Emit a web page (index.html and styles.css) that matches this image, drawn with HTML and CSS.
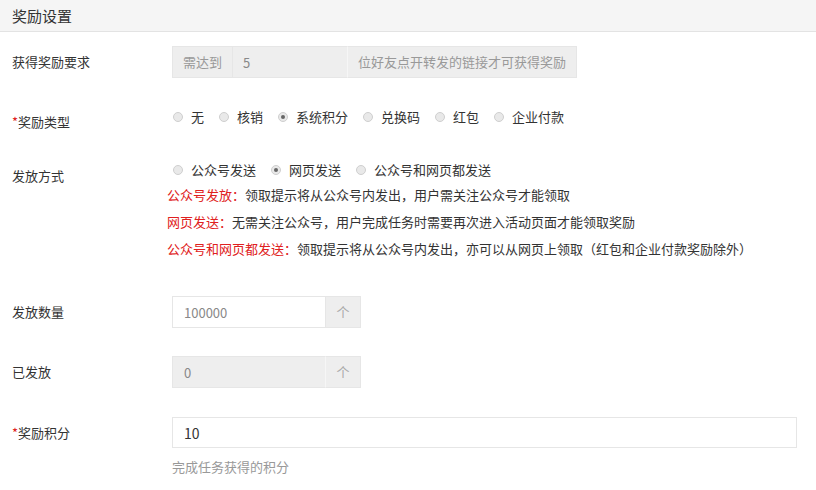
FILE: index.html
```html
<!DOCTYPE html>
<html lang="zh-CN">
  <head>
    <meta charset="UTF-8" />
    <title>奖励设置</title>
    <meta name="viewport" content="width=device-width, initial-scale=1.0" />
    <link rel="stylesheet" href="styles.css">
  </head>
  <body>
    <div class="panel-head">奖励设置</div>

    <div class="form">
      <div class="row row-require">
        <div class="label">获得奖励要求</div>
        <div class="group">
          <span class="addon">需达到</span>
          <input class="group-input" type="text" value="5" disabled />
          <span class="addon">位好友点开转发的链接才可获得奖励</span>
        </div>
      </div>

      <div class="row row-type">
        <div class="label label-radio"><span class="req">*</span>奖励类型</div>
        <div class="radios">
          <label><input type="radio" name="type" />无</label>
          <label><input type="radio" name="type" />核销</label>
          <label><input type="radio" name="type" checked />系统积分</label>
          <label><input type="radio" name="type" />兑换码</label>
          <label><input type="radio" name="type" />红包</label>
          <label><input type="radio" name="type" />企业付款</label>
        </div>
      </div>

      <div class="row row-send">
        <div class="label label-radio">发放方式</div>
        <div>
          <div class="radios">
            <label><input type="radio" name="send" />公众号发送</label>
            <label><input type="radio" name="send" checked />网页发送</label>
            <label><input type="radio" name="send" />公众号和网页都发送</label>
          </div>
          <div class="send-help">
            <p><span class="red">公众号发放：</span>领取提示将从公众号内发出，用户需关注公众号才能领取</p>
            <p><span class="red">网页发送：</span>无需关注公众号，用户完成任务时需要再次进入活动页面才能领取奖励</p>
            <p><span class="red">公众号和网页都发送：</span>领取提示将从公众号内发出，亦可以从网页上领取（红包和企业付款奖励除外）</p>
          </div>
        </div>
      </div>

      <div class="row row-amount">
        <div class="label">发放数量</div>
        <div class="group">
          <input class="num-input" type="text" value="100000" />
          <span class="unit">个</span>
        </div>
      </div>

      <div class="row row-sent">
        <div class="label">已发放</div>
        <div class="group">
          <input class="num-input" type="text" value="0" disabled />
          <span class="unit">个</span>
        </div>
      </div>

      <div class="row row-points">
        <div class="label"><span class="req">*</span>奖励积分</div>
        <div class="points">
          <input class="wide-input" type="text" value="10" />
          <div class="hint">完成任务获得的积分</div>
        </div>
      </div>
    </div>
  </body>
</html>
```

FILE: styles.css
```css
body {
  margin: 0;
  font-family: "Microsoft YaHei", "Noto Sans CJK SC", sans-serif;
  font-size: 13px;
  color: #333;
  background: #fff;
}

.panel-head {
  height: 31px;
  line-height: 31px;
  padding-left: 12px;
  font-size: 15px;
  background: #f5f5f5;
  border-bottom: 1px solid #e3e3e3;
}

.row {
  display: flex;
  align-items: flex-start;
}

.label {
  width: 172px;
  padding-left: 12px;
  box-sizing: border-box;
  line-height: 32px;
  flex-shrink: 0;
}

.label-radio {
  line-height: 18px;
  margin-top: 5px;
}

.req {
  color: #e02020;
}

.row-require { margin-top: 14px; }
.row-type { margin-top: 30px; }
.row-send { margin-top: 30px; }
.row-send .label-radio { margin-top: 6px; }
.row-amount { margin-top: 34px; }
.row-sent { margin-top: 28px; }
.row-points { margin-top: 29px; }

/* input groups */
.group {
  display: flex;
  height: 32px;
}

.addon {
  padding: 0 10px;
  line-height: 30px;
  background: #eee;
  color: #999;
  border: 1px solid #e6e6e6;
  white-space: nowrap;
}

.addon + .group-input {
  border-left-color: #f6f6f6;
}

.group-input + .addon {
  border-left-color: #f6f6f6;
}

.group-input {
  width: 114px;
  box-sizing: border-box;
  border: 1px solid #e6e6e6;
  border-left: 0;
  border-right: 0;
  padding: 0 10px;
  font: inherit;
  color: #888;
  background: #eee;
  outline: none;
}

.num-input {
  width: 154px;
  box-sizing: border-box;
  border: 1px solid #e6e6e6;
  padding: 0 11px;
  font: inherit;
  color: #888;
  background: #fff;
  outline: none;
}

.num-input:disabled {
  background: #eee;
  border-right-color: #f6f6f6;
}

.unit {
  width: 35px;
  box-sizing: border-box;
  text-align: center;
  line-height: 30px;
  color: #aaa;
  background: #eee;
  border: 1px solid #e6e6e6;
  border-left: 0;
}

/* radios */
.radios {
  display: flex;
  line-height: 18px;
}

.radios label {
  display: flex;
  align-items: center;
  margin-right: 14px;
}

.radios input {
  appearance: none;
  -webkit-appearance: none;
  width: 10px;
  height: 10px;
  margin: 0 8px 0 1px;
  border: 1px solid #cfcfcf;
  border-radius: 50%;
  background: #e9e9e9;
  box-sizing: border-box;
  position: relative;
}

.radios input:checked::after {
  content: "";
  position: absolute;
  left: 2px;
  top: 2px;
  width: 4px;
  height: 4px;
  border-radius: 50%;
  background: #666;
}

.send-help {
  margin: 2px 0 0 -5px;
}

.send-help p {
  margin: 0;
  line-height: 27px;
  white-space: nowrap;
}

.red {
  color: #e02020;
}

/* points */
.points {
  width: 625px;
}

.wide-input {
  width: 100%;
  height: 31px;
  box-sizing: border-box;
  border: 1px solid #e6e6e6;
  padding: 0 11px;
  font: inherit;
  font-size: 14px;
  color: #333;
  outline: none;
}

.hint {
  margin-top: 9px;
  line-height: 20px;
  color: #999;
}
```
